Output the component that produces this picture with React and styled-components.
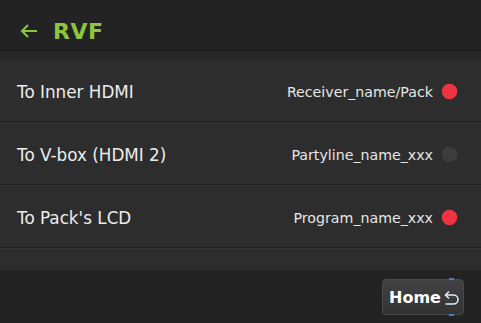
import React from 'react';
import styled, { createGlobalStyle } from 'styled-components';

const GlobalStyle = createGlobalStyle`
  html, body {
    margin: 0;
    padding: 0;
    background: #232323;
  }
  body {
    font-family: "DejaVu Sans", "Liberation Sans", sans-serif;
  }
`;

const Screen = styled.div`
  width: 481px;
  height: 323px;
  display: flex;
  flex-direction: column;
  background: #232323;
  overflow: hidden;
`;

const Header = styled.div`
  height: 51px;
  display: flex;
  align-items: center;
  gap: 14px;
  padding: 12px 0 0 19px;
  box-sizing: border-box;
  background: #232323;
  border-bottom: 1px solid #1b1b1b;
`;

const Title = styled.h1`
  margin: 0;
  font-family: "DejaVu Sans", sans-serif;
  font-weight: bold;
  font-size: 22px;
  color: #8cc63f;
  letter-spacing: 0.5px;
`;

const Spacer = styled.div`
  height: 9px;
  background: #272727;
`;

const List = styled.div`
  height: 210px;
  background: #2d2d2d;
  display: flex;
  flex-direction: column;
`;

const Row = styled.div`
  height: 62px;
  flex-shrink: 0;
  display: flex;
  align-items: center;
  justify-content: space-between;
  padding: 2px 24px 0 17px;
  box-sizing: border-box;
  border-bottom: 1px solid #1e1e1e;
  box-shadow: 0 1px 0 #363636;
  & + & {
    margin-top: 1px;
  }
`;

const Label = styled.span`
  font-size: 16.8px;
  color: #ececec;
`;

const Source = styled.span`
  display: flex;
  align-items: center;
  gap: 9px;
  font-size: 14.2px;
  color: #e6e6e6;
`;

const Dot = styled.span`
  width: 15px;
  height: 15px;
  border-radius: 50%;
  background: ${({ on }) => (on ? '#ef3340' : '#3c3c3c')};
  box-shadow: ${({ on }) => (on ? '0 0 1px #ff5060' : 'inset 0 0 1px #555')};
`;

const Footer = styled.div`
  flex: 1;
  display: flex;
  justify-content: flex-end;
  align-items: flex-start;
  padding: 9px 17px 0 0;
  background: #232323;
`;

const HomeButton = styled.button`
  position: relative;
  width: 82px;
  height: 36px;
  display: flex;
  align-items: center;
  justify-content: center;
  gap: 2px;
  padding: 1px 0 0 3px;
  border: 1px solid #4a4a4a;
  border-radius: 4px;
  background: linear-gradient(#424242, #333333);
  color: #ffffff;
  font-family: "DejaVu Sans", sans-serif;
  font-weight: bold;
  font-size: 16px;
  cursor: pointer;
  &::before,
  &::after {
    content: '';
    position: absolute;
    left: 66px;
    width: 5px;
    height: 2px;
    background: #3f7fd0;
  }
  &::before {
    top: -2px;
  }
  &::after {
    bottom: -2px;
  }
`;

const BackArrow = () => (
  <svg width="20" height="16" viewBox="0 0 20 16">
    <path d="M18 8 H3 M9 2 L3 8 L9 14" fill="none" stroke="#8cc63f" strokeWidth="2" />
  </svg>
);

const ReturnIcon = () => (
  <svg width="17" height="18" viewBox="0 0 17 18" style={{ flexShrink: 0 }}>
    <path d="M2.5 6 H10.5 A4.5 4.5 0 0 1 10.5 15 H2.5" fill="none" stroke="#e4edf8" strokeWidth="1.5" />
    <path d="M6 2.5 L2.5 6 L6 9.5" fill="none" stroke="#e4edf8" strokeWidth="1.5" />
  </svg>
);

const rows = [
  { label: 'To Inner HDMI', source: 'Receiver_name/Pack', on: true },
  { label: 'To V-box (HDMI 2)', source: 'Partyline_name_xxx', on: false },
  { label: "To Pack's LCD", source: 'Program_name_xxx', on: true },
];

export default function App() {
  return (
    <Screen>
      <GlobalStyle />
      <Header>
        <BackArrow />
        <Title>RVF</Title>
      </Header>
      <Spacer />
      <List>
        {rows.map((r) => (
          <Row key={r.label}>
            <Label>{r.label}</Label>
            <Source>
              {r.source}
              <Dot on={r.on} />
            </Source>
          </Row>
        ))}
      </List>
      <Footer>
        <HomeButton>
          Home
          <ReturnIcon />
        </HomeButton>
      </Footer>
    </Screen>
  );
}
